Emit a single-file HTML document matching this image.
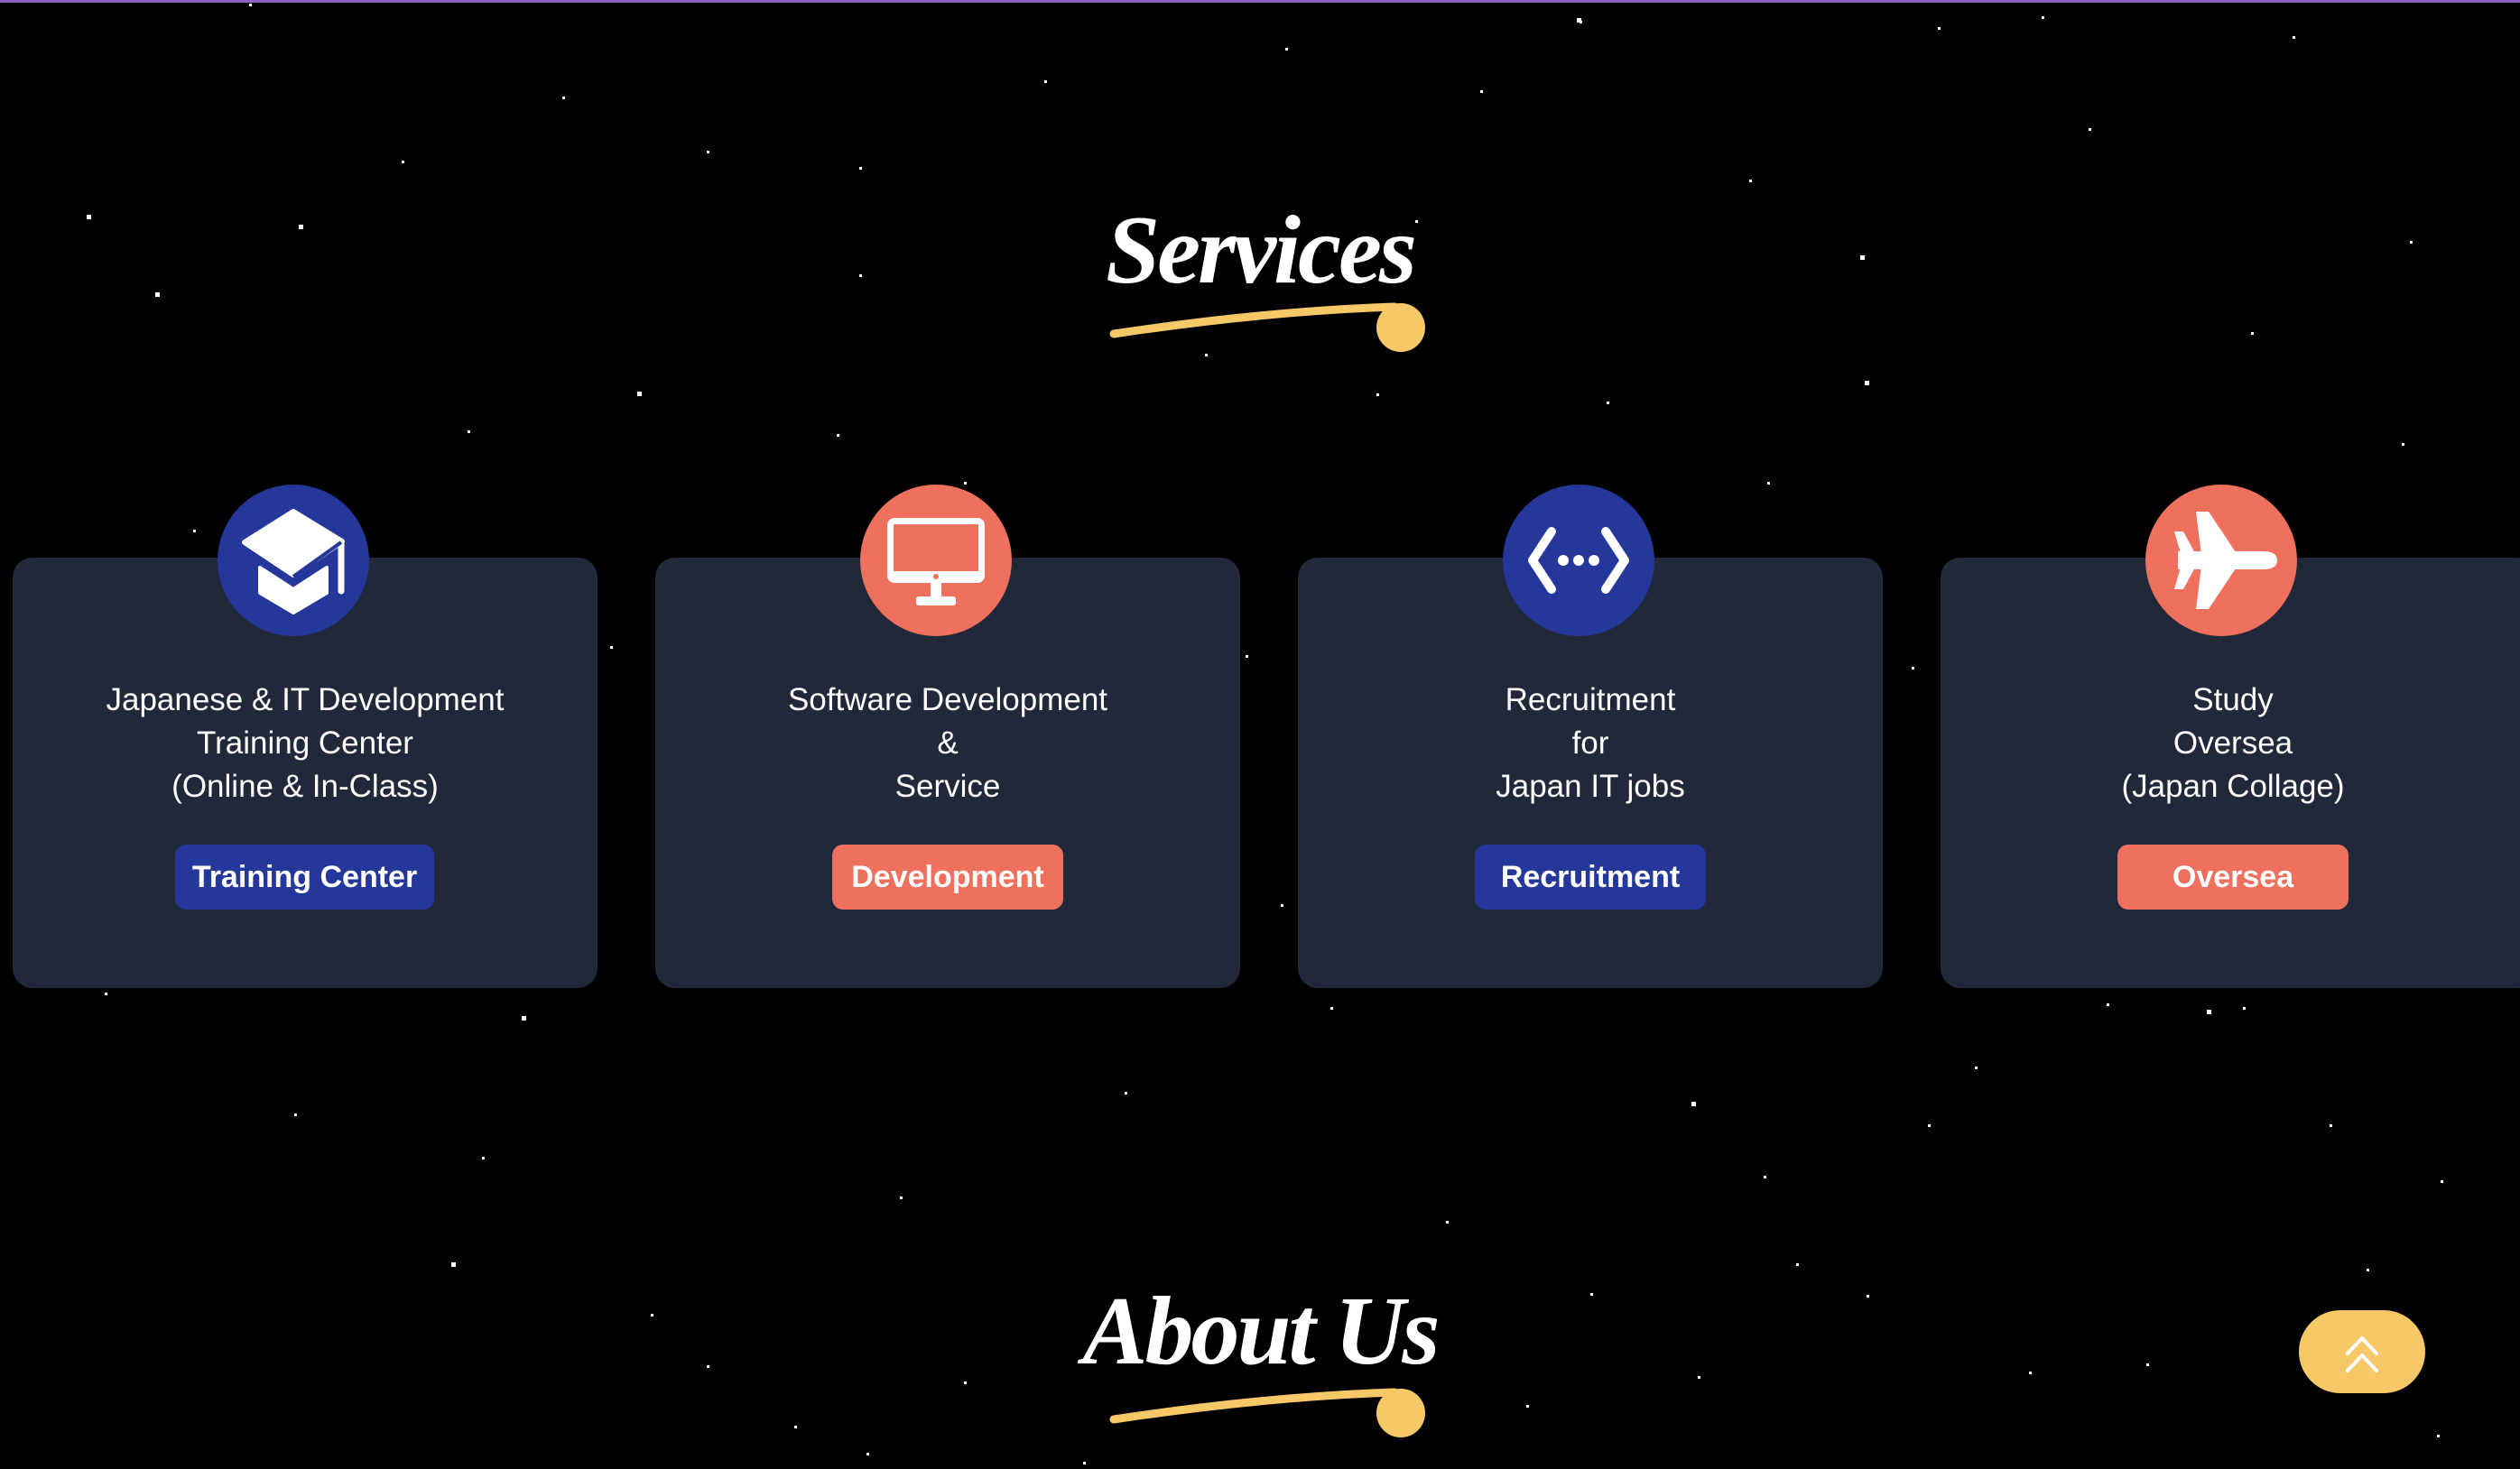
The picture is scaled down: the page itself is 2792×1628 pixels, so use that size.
<!DOCTYPE html>
<html><head><meta charset="utf-8">
<style>
html,body{margin:0;padding:0}
body{width:2792px;height:1628px;background:#000;position:relative;overflow:hidden;font-family:"Liberation Sans",sans-serif;color:#fff}
.topline{position:absolute;left:0;top:0;width:2792px;height:3px;background:#8a63c4}
.stars{position:absolute;left:0;top:0;width:3px;height:3px;background:transparent;
box-shadow:276px 4px #fff,1750px 23px #fff,2262px 18px #fff,2147px 30px #fff,98px 240px #fff,333px 251px #fff,173px 326px #fff,708px 436px #fff,518px 477px #fff,927px 481px #fff,952px 185px #fff,783px 167px #fff,2063px 285px #fff,2068px 424px #fff,2494px 368px #fff,2661px 491px #fff,1938px 199px #fff,1568px 244px #fff,1525px 436px #fff,952px 304px #fff,580px 1128px #fff,326px 1234px #fff,1876px 1223px #fff,2446px 1121px #fff,2485px 1116px #fff,1380px 726px #fff,1419px 1002px #fff,2150px 910px #fff,2334px 1112px #fff,1474px 1116px #fff,502px 1401px #fff,997px 1326px #fff,2188px 1182px #fff,1881px 1525px #fff,2378px 1511px #fff,2248px 1520px #fff,116px 1100px #fff,2068px 1435px #fff,1954px 1303px #fff,2622px 1406px #fff,2704px 1308px #fff,1691px 1557px #fff,1762px 1433px #fff,783px 1513px #fff,721px 1456px #fff,1068px 1531px #fff,2581px 1246px #fff,534px 1282px #fff,1246px 1210px #fff,1602px 1353px #fff,2136px 1246px #fff,2670px 267px #fff,2314px 142px #fff,1157px 89px #fff,1424px 53px #fff,623px 107px #fff,445px 178px #fff,1780px 445px #fff,1335px 392px #fff,1068px 534px #fff,1958px 534px #fff,2492px 587px #fff,214px 587px #fff,356px 712px #fff,2634px 748px #fff,2723px 854px #fff,36px 837px #fff,2118px 739px #fff,676px 716px #fff,1640px 100px #fff,2540px 40px #fff,430px 1000px #fff,2200px 1000px #fff,1200px 1620px #fff,960px 1610px #fff,2700px 1590px #fff,1990px 1400px #fff,880px 1580px #fff}
.big{position:absolute;width:5px;height:5px;background:#fff}
.title{position:absolute;left:0;width:2792px;text-align:center;font-family:"Liberation Serif",serif;font-style:italic;font-weight:bold;font-size:108px;line-height:120px;letter-spacing:-3px}
.card{position:absolute;top:618px;width:648px;height:477px;background:#212839;border-radius:22px}
.circ{position:absolute;top:537px;width:168px;height:168px;border-radius:50%}
.circ svg{position:absolute;left:0;top:0}
.blue{background:#26379b}.coral{background:#ef705c}
.txt{position:absolute;left:0;width:100%;top:134px;text-align:center;font-size:35px;line-height:48px}
.btn{position:absolute;top:318px;height:72px;border-radius:12px;font-weight:bold;font-size:34px;line-height:72px;text-align:center;color:#fff}
.up{position:absolute;left:2547px;top:1452px;width:140px;height:92px;border-radius:46px;background:#f6c867}
</style></head><body>
<div class="topline"></div>
<div class="stars"></div>
<div class="big" style="left:96px;top:238px"></div>
<div class="big" style="left:331px;top:249px"></div>
<div class="big" style="left:172px;top:324px"></div>
<div class="big" style="left:706px;top:434px"></div>
<div class="big" style="left:2061px;top:283px"></div>
<div class="big" style="left:2066px;top:422px"></div>
<div class="big" style="left:1747px;top:20px"></div>
<div class="big" style="left:578px;top:1126px"></div>
<div class="big" style="left:1874px;top:1221px"></div>
<div class="big" style="left:2445px;top:1119px"></div>
<div class="big" style="left:500px;top:1399px"></div>

<div class="title" style="top:218px">Services</div>
<svg style="position:absolute;left:0;top:0" width="2792" height="1628">
<path d="M1234 370 Q1400 345 1545 340" stroke="#f6c867" stroke-width="9" fill="none" stroke-linecap="round"/>
<circle cx="1552" cy="363" r="27" fill="#f6c867"/>
<path d="M1234 1573 Q1400 1548 1545 1543" stroke="#f6c867" stroke-width="9" fill="none" stroke-linecap="round"/>
<circle cx="1552" cy="1566" r="27" fill="#f6c867"/>
</svg>
<div class="title" style="top:1416px">About Us</div>

<div class="card" style="left:14px">
 <div class="txt">Japanese &amp; IT Development<br>Training Center<br>(Online &amp; In-Class)</div>
 <div class="btn blue" style="left:180px;width:287px">Training Center</div>
</div>
<div class="card" style="left:726px">
 <div class="txt">Software Development<br>&amp;<br>Service</div>
 <div class="btn coral" style="left:196px;width:256px">Development</div>
</div>
<div class="card" style="left:1438px">
 <div class="txt">Recruitment<br>for<br>Japan IT jobs</div>
 <div class="btn blue" style="left:196px;width:256px">Recruitment</div>
</div>
<div class="card" style="left:2150px;width:660px">
 <div class="txt" style="width:648px">Study<br>Oversea<br>(Japan Collage)</div>
 <div class="btn coral" style="left:196px;width:256px">Oversea</div>
</div>

<div class="circ blue" style="left:241px"><svg width="168" height="168">
<polygon points="30,64 84,30 138,63 84,100" fill="#fff" stroke="#fff" stroke-width="6" stroke-linejoin="round"/>
<polygon points="47,92 84,116 121,92 121,120 84,142 47,120" fill="#fff" stroke="#fff" stroke-width="4" stroke-linejoin="round"/>
<path d="M137 64 V118" stroke="#fff" stroke-width="7" stroke-linecap="round"/>
<path d="M84 102 L137 64" stroke="#26379b" stroke-width="4"/>
</svg></div>
<div class="circ coral" style="left:953px"><svg width="168" height="168">
<rect x="30" y="37" width="108" height="72" rx="8" fill="#fff"/>
<rect x="37" y="44" width="94" height="52" fill="#ef705c"/>
<circle cx="84" cy="102" r="3" fill="#ef705c"/>
<rect x="78" y="108" width="12" height="18" fill="#fff"/>
<rect x="62" y="124" width="44" height="10" rx="3" fill="#fff"/>
</svg></div>
<div class="circ blue" style="left:1665px"><svg width="168" height="168">
<path d="M54 52 L33 84 L54 116 M114 52 L135 84 L114 116" stroke="#fff" stroke-width="10" fill="none" stroke-linecap="round" stroke-linejoin="round"/>
<circle cx="67" cy="84" r="6" fill="#fff"/><circle cx="84" cy="84" r="6" fill="#fff"/><circle cx="101" cy="84" r="6" fill="#fff"/>
</svg></div>
<div class="circ coral" style="left:2377px"><svg width="168" height="168">
<path d="M36 74 H130 Q146 74 146 84 Q146 94 130 94 H36 Z" fill="#fff"/>
<polygon points="62,78 56,30 70,30 102,78" fill="#fff"/>
<polygon points="62,90 56,138 70,138 102,90" fill="#fff"/>
<polygon points="40,80 32,52 42,52 56,78" fill="#fff"/>
<polygon points="40,88 32,116 42,116 56,90" fill="#fff"/>
</svg></div>

<div class="up"><svg width="140" height="92">
<path d="M54 48 L70 31 L86 48 M54 67 L70 50 L86 67" stroke="#fff" stroke-width="4" fill="none" stroke-linecap="round" stroke-linejoin="round"/>
</svg></div>
</body></html>
